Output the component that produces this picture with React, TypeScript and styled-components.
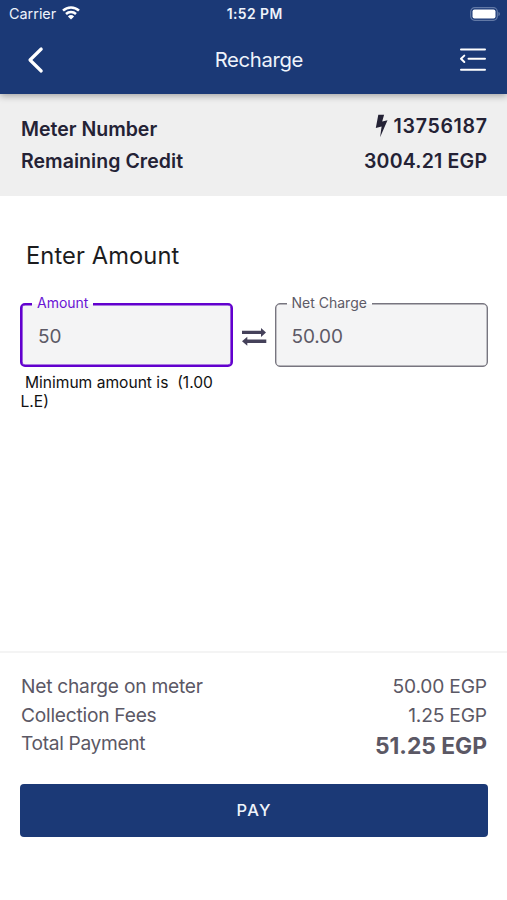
import React from "react";
import styled, { createGlobalStyle } from "styled-components";

const Global = createGlobalStyle`
  * { box-sizing: border-box; }
  body { margin: 0; background: #fff; font-family: Inter, "Liberation Sans", sans-serif; }
`;

const Screen = styled.main`
  display: flex;
  flex-direction: column;
  width: 507px;
  height: 900px;
  background: #fff;
  overflow: hidden;
`;

interface LabelProps {
  $size: number;
  $weight?: number;
  $spacing?: number;
}

const Label = styled.span<LabelProps>`
  font-size: ${(p) => p.$size}px;
  font-weight: ${(p) => p.$weight ?? 400};
  letter-spacing: ${(p) => p.$spacing ?? 0}px;
  margin-right: ${(p) => -(p.$spacing ?? 0)}px;
  white-space: pre;
`;

const Header = styled.header`
  height: 94px;
  flex: none;
  background: #1b3976;
  color: #eef3fb;
  box-shadow: 0 2px 7px rgba(0, 0, 0, 0.32);
  z-index: 1;
`;

const StatusBar = styled.div`
  display: grid;
  grid-template-columns: 1fr auto 1fr;
  align-items: center;
  height: 28px;
  padding: 0 7px 0 9px;
`;

const Carrier = styled.div`
  display: flex;
  align-items: center;
  gap: 6px;
  padding-bottom: 1px;

  svg {
    margin-top: -1px;
  }
`;

const Battery = styled.svg`
  justify-self: end;
  margin-top: -1px;
`;

const NavBar = styled.nav`
  display: grid;
  grid-template-columns: 1fr auto 1fr;
  align-items: center;
  height: 64px;
  padding: 0 17px 0 27px;
`;

const IconButton = styled.button<{ $end?: boolean }>`
  display: flex;
  padding: 0;
  border: 0;
  background: none;
  color: #fff;
  justify-self: ${(p) => (p.$end ? "end" : "start")};
  margin-left: ${(p) => (p.$end ? 0 : -1)}px;
`;

const Title = styled.div`
  padding: 0 0 2px 1px;
`;

const MeterPanel = styled.section`
  display: flex;
  justify-content: space-between;
  flex: none;
  height: 102px;
  padding: 19px 20px 0 21px;
  background: #efefef;
  color: #242235;
`;

const Column = styled.div<{ $end?: boolean; $line: number }>`
  display: flex;
  flex-direction: column;
  align-items: ${(p) => (p.$end ? "flex-end" : "flex-start")};
  line-height: ${(p) => p.$line}px;
`;

const MeterId = styled.div`
  display: flex;
  align-items: center;
  gap: 6px;
  height: 32px;
  padding-bottom: 6px;
`;

const Form = styled.section`
  flex: 1;
  padding: 44px 19px 0 20px;
`;

const Heading = styled.h1`
  margin: 0 0 31px;
  padding-left: 6px;
  font-size: 23.7px;
  font-weight: 400;
  line-height: 32px;
  letter-spacing: 0.1px;
  color: #1c1c1e;
`;

const Fields = styled.div`
  display: grid;
  grid-template-columns: 213px 41.5px 213px;
  align-items: center;
`;

const Field = styled.label<{ $active?: boolean }>`
  position: relative;
  display: flex;
  align-items: center;
  height: 64px;
  padding: 3px 0 0 16px;
  border: ${(p) => (p.$active ? "2px solid #6200ce" : "1px solid #77757f")};
  box-shadow: ${(p) => (p.$active ? "inset 0 0 0 0.6px #6200ce" : "inset 0 0 0 0.4px #77757f")};
  border-radius: 5px;
  background: #f4f4f5;
  color: #5d5a66;
`;

const FieldName = styled.span<{ $active?: boolean }>`
  position: absolute;
  top: ${(p) => (p.$active ? -13 : -12)}px;
  left: ${(p) => (p.$active ? 10 : 11)}px;
  padding: 0 5px 2px;
  line-height: 20px;
  background: linear-gradient(#fff 0 12px, #f4f4f5 12px);
  color: ${(p) => (p.$active ? "#6914d4" : "#5d5a66")};
`;

const Swap = styled.div`
  display: flex;
  justify-content: center;
  padding-top: 4px;
`;

const Hint = styled.p`
  width: 214px;
  margin: 7px 0 0;
  padding-left: 0.5px;
  font-size: 15.6px;
  line-height: 18.5px;
  white-space: pre-wrap;
  color: #111;
`;

const Footer = styled.footer`
  flex: none;
  height: 249px;
  padding: 19px 19px 0 20px;
  border-top: 2px solid #f4f4f4;
`;

const Summary = styled.div`
  display: flex;
  justify-content: space-between;
  height: 112px;
  padding: 0 1px;
  color: #5b5865;
`;

const Total = styled.div`
  padding-top: 3px;
`;

const PayButton = styled.button`
  display: flex;
  align-items: center;
  justify-content: center;
  width: 468px;
  height: 53px;
  padding: 0 1px 2px 0;
  border: 0;
  border-radius: 4px;
  background: #1b3976;
  color: #eef3fb;
  font-family: inherit;
`;

export default function App() {
  return (
    <>
      <Global />
      <Screen>
        <Header>
          <StatusBar>
            <Carrier>
              <Label $size={14.4}>Carrier</Label>
              <svg width="18" height="14" viewBox="0 0 18 14" fill="none" stroke="#fff" strokeWidth="2.5">
                <path d="M1 4.7a11.5 11.5 0 0 1 16 0" />
                <path d="M4 8a7.3 7.3 0 0 1 10 0" />
                <path d="M9 13.6 5.9 10.4a4.6 4.6 0 0 1 6.2 0Z" fill="#fff" stroke="none" />
              </svg>
            </Carrier>
            <Label $size={13.9} $weight={600} $spacing={0.45}>1:52 PM</Label>
            <Battery width="30" height="14" viewBox="0 0 30 14">
              <rect x="0.7" y="0.7" width="26.6" height="12.6" rx="4" fill="none" stroke="#6279a6" strokeWidth="1.2" />
              <rect x="2.5" y="2.5" width="23" height="9" rx="2" fill="#fff" />
              <path d="M28.5 5c1.7.8 1.7 3.2 0 4Z" fill="#7186ae" />
            </Battery>
          </StatusBar>
          <NavBar>
            <IconButton aria-label="Back">
              <svg width="18" height="28" viewBox="0 0 18 28" fill="none" stroke="currentColor" strokeWidth="3.2" strokeLinecap="round" strokeLinejoin="round">
                <path d="M15.2 3 4 14l11.2 11" />
              </svg>
            </IconButton>
            <Title><Label $size={20.3} $spacing={-0.35}>Recharge</Label></Title>
            <IconButton $end aria-label="Menu">
              <svg width="31" height="26" viewBox="0 0 31 26" fill="none" stroke="currentColor" strokeWidth="2" strokeLinecap="round" strokeLinejoin="round">
                <path d="M2 2.5h24M9.5 11.8h16.5M2 22.7h24M5.3 8.6 2 11.8l3.3 3.2" />
              </svg>
            </IconButton>
          </NavBar>
        </Header>

        <MeterPanel>
          <Column $line={32}>
            <Label $size={19.5} $weight={600}>Meter Number</Label>
            <Label $size={19.5} $weight={600} $spacing={0.05}>Remaining Credit</Label>
          </Column>
          <Column $end $line={32}>
            <MeterId>
              <svg width="13" height="24" viewBox="0 0 13 24" fill="currentColor">
                <path d="M3.3 0.8h5.8L7.2 7.6l5.3-1.3L5.1 23.3 6.6 12.6 0.8 14Z" />
              </svg>
              <Label $size={19.6} $weight={600} $spacing={0.65}>13756187</Label>
            </MeterId>
            <Label $size={19.5} $weight={600} $spacing={0.2}>3004.21 EGP</Label>
          </Column>
        </MeterPanel>

        <Form>
          <Heading>Enter Amount</Heading>
          <Fields>
            <Field $active>
              <FieldName $active><Label $size={14}>Amount</Label></FieldName>
              <Label $size={19}>50</Label>
            </Field>
            <Swap>
              <svg width="26" height="20" viewBox="0 0 26 20" fill="#45415a">
                <path d="M1 3.7H20V0.9l5 4.5-5 4.5V7.1H1Z" />
                <path d="M25.3 12.6H6.3V9.8l-5.3 4.5 5.3 4.5V16h19Z" />
              </svg>
            </Swap>
            <Field>
              <FieldName><Label $size={14}>Net Charge</Label></FieldName>
              <Label $size={19} $spacing={-0.15}>50.00</Label>
            </Field>
          </Fields>
          <Hint>{" Minimum amount is  (1.00 L.E)"}</Hint>
        </Form>

        <Footer>
          <Summary>
            <Column $line={28.5}>
              <Label $size={19.2} $spacing={-0.25}>Net charge on meter</Label>
              <Label $size={19.2} $spacing={-0.25}>Collection Fees</Label>
              <Label $size={19.2} $spacing={-0.35}>Total Payment</Label>
            </Column>
            <Column $end $line={28.5}>
              <Label $size={19.2} $spacing={-0.2}>50.00 EGP</Label>
              <Label $size={19.2} $spacing={-0.2}>1.25 EGP</Label>
              <Total><Label $size={22.8} $weight={700}>51.25 EGP</Label></Total>
            </Column>
          </Summary>
          <PayButton><Label $size={16.5} $weight={500} $spacing={1.3}>PAY</Label></PayButton>
        </Footer>
      </Screen>
    </>
  );
}
